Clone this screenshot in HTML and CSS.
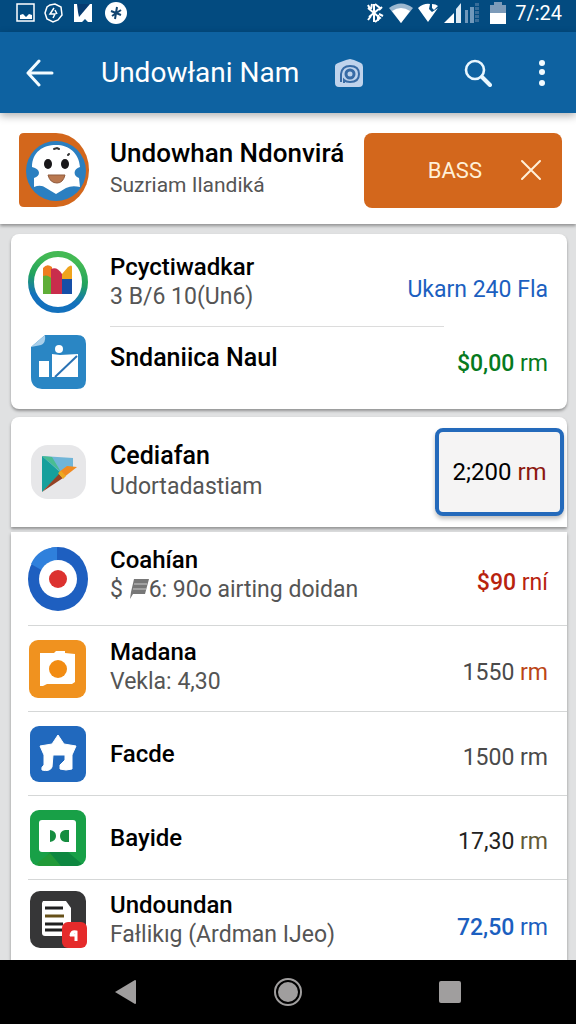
FILE: index.html
```
<!DOCTYPE html>
<html lang="id">
<head>
<meta charset="UTF-8" />
<meta name="viewport" content="width=device-width, initial-scale=1.0" />
<title>Undowłani Nam</title>
<link rel="stylesheet" href="styles.css">
</head>
<body>
<div class="status-bar">
    <div class="status-left">
        <svg width="20" height="20" viewBox="0 0 20 20"><rect x="1" y="1" width="17" height="17" fill="none" stroke="#fff" stroke-width="1.5"/><path d="M4 16v-4l3-1 3 3 3-3 3 1v4z" fill="#fff"/></svg>
        <svg width="20" height="20" viewBox="0 0 20 20" fill="none" stroke="#fff" stroke-width="1.5"><path d="M7 2l5-1 6 3 1 8-4 5-5 2-6-3-2-6 2-6z"/><path d="M11 5l-4 6h5l-2 4M12 7l2 4" /></svg>
        <svg class="status-note" width="18" height="20" viewBox="0 0 18 20"><path d="M0 1h18v18h-4l-3-3-3 3H0z" fill="#fff"/><path d="M3 1h13L5 14 4 9z" fill="#063b70"/></svg>
        <svg class="status-star" width="22" height="22" viewBox="0 0 22 22"><circle cx="11" cy="11" r="11" fill="#fff"/><path d="M12 5l-2 12M6 9l10 4M16 8L7 14" stroke="#12446f" stroke-width="2"/></svg>
    </div>
    <div class="status-right">
        <svg width="18" height="22" viewBox="0 0 18 22" fill="none" stroke="#fff" stroke-width="2"><path d="M8 2v18M9 2l5 4-11 9M9 20l5-4L2 6M6 2l-1 5M13 8l3-3M13 12l4 2M12 13v6M5 14l-3 4M2 3l2 4"/></svg>
        <svg width="24" height="20" viewBox="0 0 24 20"><path d="M0 5q12-9 24 0L12 20z" fill="#9cb8cf"/><path d="M3 8q9-6 18 0l-9 12z" fill="#fff"/></svg>
        <svg width="21" height="20" viewBox="0 0 21 20"><path d="M0 5q6-5 12-4l-1 5 3 3 6-4-10 14z" fill="#fff"/><path d="M14 1q4 0 6 2l-4 4-2-2z" fill="#fff"/></svg>
        <svg width="37" height="20" viewBox="0 0 37 20"><path d="M0 20L10 10v10z" fill="#fff"/><path d="M12 6l5-6v20h-5z" fill="#dce9f3"/><path d="M21 7h3v13h-3zM26 4h4v16h-4z" fill="#7098bb"/><path d="M33 0v20" stroke="#396d99" stroke-width="4" stroke-dasharray="3 1"/></svg>
        <svg class="battery" width="16" height="22" viewBox="0 0 16 22"><path d="M0 3h4V0h8v3h4v8H0z" fill="#7d9bb9"/><path d="M0 11h16v11H0z" fill="#fff"/></svg>
        <span class="clock">7/:24</span>
    </div>
</div>
<header class="app-bar">
    <button class="icon-btn" aria-label="Back">
        <svg width="28" height="28" viewBox="0 0 28 28" fill="none" stroke="#f2fbff" stroke-width="3" stroke-linecap="round" stroke-linejoin="round"><path d="M13 2L2 14l11 12M2 14h24"/></svg>
    </button>
    <h1>Undowłani Nam</h1>
    <button class="icon-btn camera" aria-label="Camera">
        <svg width="28" height="28" viewBox="0 0 28 28"><path d="M0 7q0-2 3-3l8-3 4-1 4 1 7 3q2 1 2 4v16q0 4-4 4H4q-4 0-4-4z" fill="#bfd3ec"/><path d="M6 23V15q1-8 9-8 9 0 9 8t-9 8q-4 0-6-2v3" fill="none" stroke="#386ba5" stroke-width="2"/><circle cx="15" cy="15" r="4" fill="none" stroke="#386ba5" stroke-width="3"/></svg>
    </button>
    <button class="icon-btn search" aria-label="Search">
        <svg width="28" height="28" viewBox="0 0 28 28" fill="none" stroke="#e9f7ff"><circle cx="11" cy="11" r="9" stroke-width="2.6"/><path d="M18 18l8 8" stroke-width="4" stroke-linecap="round"/></svg>
    </button>
    <button class="icon-btn" aria-label="More">
        <svg width="8" height="28" viewBox="0 0 8 28" fill="#f2fbff"><circle cx="4" cy="4" r="3"/><circle cx="4" cy="13" r="3"/><circle cx="4" cy="24" r="3"/></svg>
    </button>
</header>
<main>
    <section class="account">
        <svg width="72" height="76" viewBox="0 0 72 76">
            <path d="M6 1h32a33 37 0 0 1 0 74H6q-5 0-5-5V6q0-5 5-5z" fill="#d3671c"/>
            <ellipse cx="38" cy="39" rx="30" ry="30" fill="#2b7fc0"/>
            <path d="M14 35C14 20 25 13 38 13S61 21 62 35c-7 2-7 9-1 11l1 9q-8-2-14 1l-10 6-10-6q-5-4-12-1l0-9c7-2 7-9-2-11z" fill="#fff"/>
            <ellipse cx="30" cy="32" rx="4" ry="5" fill="#181719"/><ellipse cx="47" cy="32" rx="4" ry="5" fill="#181719"/>
            <path d="M30 43h17q-2 8-8 8-7 0-9-8z" fill="#b97850" stroke="#8f5a3c"/>
            <path d="M36 17l3-1 2 1M50 23l1-1" stroke="#333" stroke-width="2" stroke-linecap="round" fill="none"/>
        </svg>
        <div class="name">
            <h2>Undowhan Ndonvirá</h2>
            <p class="account-sub">Suzriam Ilandiká</p>
        </div>
        <button class="action">
            <span>BASS</span>
            <svg width="22" height="22" viewBox="0 0 22 22" fill="none" stroke="#fff0d8" stroke-width="2" stroke-linecap="round"><path d="M2 2l18 18M20 2L2 20"/></svg>
        </button>
    </section>

    <section class="card summary">
        <div class="row">
            <svg width="60" height="62" viewBox="0 0 60 62">
                <defs><linearGradient id="ring" x1="0.6" y1="0" x2="0.4" y2="1"><stop offset="0.1" stop-color="#43b954"/><stop offset="0.45" stop-color="#22a35d"/><stop offset="0.8" stop-color="#1371bd"/></linearGradient></defs>
                <ellipse cx="30" cy="31" rx="27" ry="28" fill="#fff" stroke="url(#ring)" stroke-width="6"/>
                <path d="M15 23h9v20h-9z" fill="#5fae38"/><path d="M15 17q4-5 9-1v12q-4-5-9-3z" fill="#ef7d20"/>
                <path d="M34 27h10v16H34z" fill="#174fa7"/><path d="M34 23l6-7q4-3 4 0v12H34z" fill="#efa41e"/>
                <path d="M23 18q6-3 11 5v20H23z" fill="#c92d4c"/>
            </svg>
            <div class="name"><h3>Pcyctiwadkar</h3><p>3 B/6 10(Un6)</p></div>
            <span class="amount blue">Ukarn 240 Fla</span>
        </div>
        <hr>
        <div class="row">
            <svg width="60" height="54" viewBox="0 0 60 54">
                <path d="M17 0h32q9 0 9 9v36q0 9-9 9H14q-11-1-11-12V12z" fill="#2a86c4"/><path d="M3 12L17 0q1 8-4 10z" fill="#a9cfea"/>
                <path d="M11 26h10v16H11zM24 19l8 1 18-1v23H24z" fill="#fff"/><circle cx="31" cy="14" r="4" fill="#fff"/><path d="M27 42l22-21" stroke="#2a72b4" stroke-width="2"/>
            </svg>
            <div class="name"><h3>Sndaniica Naul</h3></div>
            <span class="amount green">$0,00 <span>rm</span></span>
        </div>
    </section>

    <section class="card featured">
        <div class="row">
            <svg width="60" height="54" viewBox="0 0 60 54">
                <rect x="3" y="0" width="55" height="54" rx="17" fill="#e7e7e9"/>
                <path d="M14 11l31 2v9L32 28z" fill="#70b5d8"/><path d="M14 11l10 1 9 15z" fill="#49bd92"/>
                <path d="M14 11l19 17-19 19z" fill="#16a09c"/><path d="M14 47l17-18 4 4z" fill="#954225"/>
                <path d="M31 27l8-6 10 1-14 11z" fill="#f18a20"/><path d="M30 28l3-2 5 5-3 3z" fill="#eda81f"/>
            </svg>
            <div class="name"><h3>Cediafan</h3><p>Udortadastiam</p></div>
            <button class="amount-box">2;200 <span class="dark-red">rm</span></button>
        </div>
    </section>

    <section class="card list">
        <ul>
            <li class="row">
                <svg width="60" height="64" viewBox="0 0 60 64">
                    <ellipse cx="30" cy="32" rx="30" ry="32" fill="#1e5fc0"/><path d="M29 0v32L3 17Q10 1 29 0z" fill="#2f80dc"/>
                    <circle cx="30" cy="32" r="19" fill="#fff"/><circle cx="30" cy="32" r="9" fill="#dc322f"/>
                </svg>
                <div class="name"><h3>Coahían</h3><p>$
                    <svg class="flag" width="20" height="20" viewBox="0 0 20 20"><path d="M5 0h15l-4 15H4l-3 5 1-7z" fill="#777"/><path d="M5 5h13M4 10h13" stroke="#ccc"/></svg>6: 90o airting doidan</p></div>
                <span class="amount red">$90 <span>rní</span></span>
            </li>
            <li class="row">
                <svg width="60" height="58" viewBox="0 0 60 58">
                    <rect x="1" y="0" width="57" height="58" rx="9" fill="#f0921f"/><path d="M12 13h14l2-2h9v2l10 1v28l-3 2H19l-4 2h-3z" fill="#fff"/><circle cx="30" cy="29" r="9" fill="#f28c13"/>
                </svg>
                <div class="name"><h3>Madana</h3><p>Vekla: 4,30</p></div>
                <span class="amount">1550 <span class="orange">rm</span></span>
            </li>
            <li class="row">
                <svg width="60" height="56" viewBox="0 0 60 56">
                    <rect x="2" y="0" width="56" height="56" rx="9" fill="#2169be"/><path d="M30 9l6 9 12 2-4 9v14q-6 2-12 0v-4l5-5v-5H25l-1 12q-2 5-10 3-1-3 2-5v-10l-4-9 12-2z" fill="#fff" stroke="#fff" stroke-linejoin="round"/>
                </svg>
                <div class="name"><h3>Facde</h3></div>
                <span class="amount">1500 rm</span>
            </li>
            <li class="row">
                <svg width="60" height="58" viewBox="0 0 60 58">
                    <rect x="2" y="1" width="56" height="56" rx="9" fill="#18a047"/><path d="M22 43h18l14 12-5 2H12z" fill="#0d8740"/><path d="M8 55l14-11 11 13H12z" fill="#219a38"/>
                    <path d="M14 11h31q3 0 3 3v29H14q-3 0-3-3V14q0-3 3-3z" fill="#fff"/><path d="M22 21q6 1 6 6t-6 6zM41 21v12h-4q-5-1-5-6t5-6z" fill="#168d40"/>
                </svg>
                <div class="name"><h3>Bayide</h3></div>
                <span class="amount dark">17,30 <span class="olive">rm</span></span>
            </li>
            <li class="row">
                <svg width="60" height="58" viewBox="0 0 60 58">
                    <rect x="2" y="0" width="56" height="57" rx="10" fill="#363637"/><path d="M15 10h23l5 7v28H17q-3 0-3-3V12z" fill="#fff"/>
                    <path d="M17 17h18M17 33h18M17 39h18" stroke="#202020" stroke-width="3"/><path d="M17 25h19" stroke="#665018" stroke-width="3"/>
                    <rect x="34" y="31" width="25" height="26" rx="6" fill="#e52b2b"/><path d="M43 45q0-5 5-4v9M42 44h7" stroke="#fff" stroke-width="3" fill="none"/>
                </svg>
                <div class="name"><h3>Undoundan</h3><p>Fałlikıg (Ardman IJeo)</p></div>
                <span class="amount blue strong">72,50 <span>rm</span></span>
            </li>
        </ul>
    </section>
</main>
<nav class="nav-bar">
    <button aria-label="Back"><svg width="24" height="26" viewBox="0 0 24 26"><path d="M1 13L21 1q1 0 1 1v22q0 1-1 1z" fill="#a09e9e"/></svg></button>
    <button aria-label="Home"><svg width="30" height="30" viewBox="0 0 30 30"><circle cx="15" cy="15" r="13" fill="none" stroke="#a09e9e" stroke-width="2"/><circle cx="15" cy="15" r="10" fill="#a09e9e"/></svg></button>
    <button aria-label="Recent apps"><svg width="24" height="24" viewBox="0 0 24 24"><rect x="1" y="1" width="22" height="22" rx="2" fill="#a09e9e"/></svg></button>
</nav>
</body>
</html>
```
FILE: styles.css
```
* { box-sizing: border-box; }
body { margin: 0; min-height: 100vh; display: flex; flex-direction: column; font-family: Roboto, sans-serif; background: #e0e1e2; color: #000; }
h1, h2, h3, p, ul { margin: 0; padding: 0; }
button { border: none; background: none; padding: 0; font-family: inherit; cursor: pointer; }
svg { display: block; flex-shrink: 0; }

.status-bar { display: flex; align-items: center; justify-content: space-between; height: 32px; padding: 0 14px 6px 16px; background: #034b80; color: #fff; }
.status-left, .status-right { display: flex; align-items: center; }
.status-left { gap: 7px; }
.status-note { margin-left: 4px; }
.status-star { margin-left: 6px; }
.status-right { gap: 5px; }
.battery { margin-left: 4px; }
.clock { font-size: 20px; line-height: 26px; margin-left: 4px; }

.app-bar { display: flex; align-items: center; height: 81px; padding: 0 30px 0 26px; background: #0e62a1; color: #fff; position: relative; box-shadow: 0 3px 8px rgba(0,0,0,0.3); }
.app-bar h1 { font-size: 28px; line-height: 32px; font-weight: 400; margin-left: 47px; }
.camera { margin-left: 36px; }
.search { margin-left: auto; margin-right: 46px; }

main { flex: 1; display: flex; flex-direction: column; }
.account { display: flex; align-items: center; height: 111px; padding: 3px 14px 0 18px; background: #fff; box-shadow: 0 2px 3px rgba(0,0,0,0.35); }
.account .name { margin-left: 20px; padding-bottom: 4px; }
h2 { font-size: 26px; line-height: 34px; font-weight: 500; }
.account-sub { font-size: 21px; color: #555; }
.action { display: flex; align-items: center; justify-content: flex-end; gap: 38px; width: 198px; height: 75px; padding-right: 20px; border-radius: 8px; background: #d3671c; color: #fff0d8; font-size: 22px; }

.card { margin: 0 9px 0 11px; background: #fff; box-shadow: 0 2px 3px rgba(0,0,0,0.35); }
.row { display: flex; align-items: center; padding-right: 19px; }
.name { flex: 1; min-width: 0; margin-left: 22px; white-space: nowrap; }
h3 { font-size: 24px; line-height: 30px; font-weight: 500; }
.name p { line-height: 30px; }
.card p { font-size: 23px; color: #555; }
.flag { display: inline-block; vertical-align: -2px; }
.amount { padding-top: 8px; font-size: 23px; line-height: 30px; color: #4a4a4a; white-space: nowrap; }

.summary { margin-top: 10px; padding: 4px 0 12px 17px; border-radius: 8px; }
.summary .row { height: 88px; }
.summary .amount { padding-top: 16px; }
.summary hr + .row { height: 70px; }
.summary hr + .row .amount { padding-top: 3px; }
.summary hr + .row .name { padding-bottom: 8px; }
.summary hr + .row h3 { font-size: 25px; }
.summary hr { width: 62%; height: 1px; margin: 0 0 0 82px; border: none; background: #dcdcdc; }

.featured { margin-top: 8px; padding-left: 17px; border-radius: 8px 8px 0 0; }
.featured .row { height: 110px; padding-right: 3px; }
.featured h3 { font-size: 25px; }
.featured p { line-height: 32px; }
.amount-box { width: 129px; height: 88px; border: 4px solid #246abb; border-radius: 8px; background: #f5f4f4; font-size: 24px; color: #000; box-shadow: 0 3px 4px rgba(0,0,0,0.25); }

.list { flex: 1; margin-top: 5px; padding-left: 17px; }
.list ul { list-style: none; }
.list .row { height: 84px; border-bottom: 1px solid #d5d7d7; }
.list .row:first-child { height: 94px; }
.list .row:nth-child(2) { height: 86px; }
.list .row:last-child { height: 80px; border-bottom: none; }
.list .name { padding-bottom: 4px; }
.list .row:nth-child(3) .name, .list .row:nth-child(4) .name { padding: 0; }
.list .row:first-child .name { padding-bottom: 8px; }
.list .row:last-child .name { padding-bottom: 0; }
.list .row:last-child .amount { padding-top: 16px; }

.blue { color: #1c5fc0; }
.green { color: #067a20; font-weight: 500; }
.red { color: #b8230e; font-weight: 500; }
.strong { font-weight: 500; }
.green span, .red span, .strong span { font-weight: 400; }
.dark { color: #222; }
.dark-red { color: #8c1710; }
.orange { color: #bb4516; }
.olive { color: #625a38; }

.nav-bar { display: flex; height: 64px; padding: 0 45px; background: #000; }
.nav-bar button { flex: 1; display: flex; align-items: center; justify-content: center; }
```
